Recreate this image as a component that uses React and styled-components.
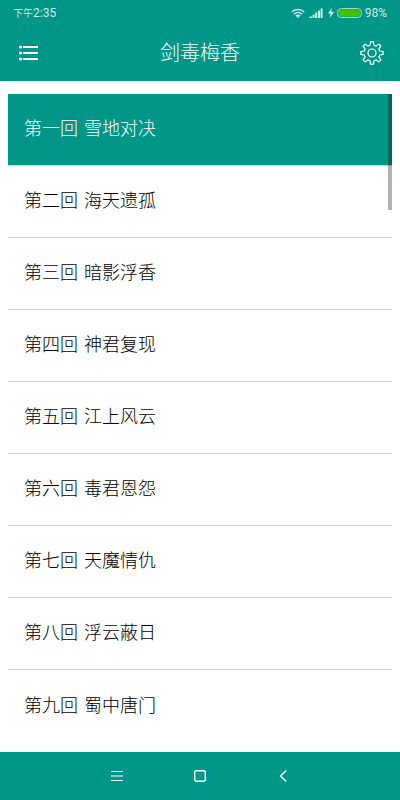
import React, { useState } from "react";
import styled, { createGlobalStyle } from "styled-components";

const teal = "#009688";

const GlobalStyle = createGlobalStyle`
  *, *::before, *::after { box-sizing: border-box; }
  body {
    margin: 0;
    background: #fff;
    font-family: "Noto Sans CJK SC", sans-serif;
    font-weight: 300;
  }
  button { font: inherit; }
`;

const Screen = styled.div`
  display: flex;
  flex-direction: column;
  height: 100vh;
`;

const Top = styled.header`
  flex: none;
  background: ${teal};
  color: #fff;
`;

const StatusBar = styled.div`
  display: flex;
  align-items: center;
  justify-content: space-between;
  height: 24px;
  padding: 2px 13px 0;
  font-family: Roboto, "Noto Sans CJK SC", sans-serif;
  font-size: 12px;
  font-weight: 400;
  line-height: 22px;
  color: #cdebe7;
`;

const DayPart = styled.span`
  font-size: 10px;
`;

const Indicators = styled.div`
  display: flex;
  align-items: center;
  gap: 3px;
`;

const TitleBar = styled.div`
  display: grid;
  grid-template-columns: 56px 1fr 56px;
  align-items: center;
  height: 57px;
`;

const Title = styled.h1`
  margin: 0;
  padding-bottom: 2px;
  font-size: 20px;
  font-weight: 300;
  line-height: 28px;
  text-align: center;
`;

const IconButton = styled.button`
  display: flex;
  align-items: center;
  justify-content: center;
  height: 48px;
  padding: 0;
  border: 0;
  background: none;
  color: #fff;
  cursor: pointer;
`;

const ListArea = styled.main`
  position: relative;
  flex: 1;
  min-height: 0;
  margin: 13px 8px 12px;
`;

const Chapters = styled.ul`
  height: 100%;
  margin: 0;
  padding: 0;
  overflow-y: auto;
  scrollbar-width: none;
  list-style: none;
`;

const Chapter = styled.li`
  height: 72px;
  border-bottom: 1px solid #cfcfcf;
  &:last-child { border-bottom: 0; }
`;

const ChapterButton = styled.button`
  display: flex;
  align-items: center;
  gap: 6px;
  width: 100%;
  height: 100%;
  padding: 0 16px 5px;
  border: 0;
  background: ${(p) => (p.$active ? teal : "transparent")};
  color: ${(p) => (p.$active ? "#fff" : "#000")};
  font-size: 18px;
  line-height: 24px;
  text-align: left;
  cursor: pointer;
`;

const ScrollThumb = styled.div`
  position: absolute;
  top: 0;
  right: 0;
  width: 4px;
  height: 116px;
  background: rgba(0, 0, 0, 0.3);
  pointer-events: none;
`;

const NavBar = styled.nav`
  display: flex;
  flex: none;
  justify-content: center;
  gap: 34px;
  height: 48px;
  background: ${teal};
  button { width: 49px; }
`;

const chapters = [
  ["第一回", "雪地对决"],
  ["第二回", "海天遗孤"],
  ["第三回", "暗影浮香"],
  ["第四回", "神君复现"],
  ["第五回", "江上风云"],
  ["第六回", "毒君恩怨"],
  ["第七回", "天魔情仇"],
  ["第八回", "浮云蔽日"],
  ["第九回", "蜀中唐门"],
];

const gearPath = (() => {
  const points = [];
  for (let i = 0; i < 8; i++) {
    const mid = (i * Math.PI) / 4;
    for (const [offset, radius] of [[-0.25, 8], [-0.13, 11.2], [0.13, 11.2], [0.25, 8]]) {
      const a = mid + offset;
      points.push(`${(12 + radius * Math.sin(a)).toFixed(2)} ${(12 - radius * Math.cos(a)).toFixed(2)}`);
    }
  }
  return `M${points.join("L")}Z`;
})();

const WifiIcon = () => (
  <svg width="14" height="11" viewBox="0 0 14 11" fill="none" stroke="currentColor" strokeWidth="1.5" aria-hidden="true">
    <path d="M.8 4C4.2.6 9.8.6 13.2 4M3 6.2c2.3-2.2 5.7-2.2 8 0M5 8.2c1.2-1.2 2.8-1.2 4 0" />
    <path d="M5.6 8.6h2.8L7 10.3z" fill="currentColor" stroke="none" />
  </svg>
);

const SignalIcon = () => (
  <svg width="17" height="10" viewBox="-2 0 17 10" fill="currentColor" aria-hidden="true">
    <path d="M-.5 8.5H2V10H-.5zM2.6 6.5h2V10h-2zM5.2 4.5h2V10h-2zM8 2.5h2V10H8zM10.6 .5h2V10h-2z" />
  </svg>
);

const BoltIcon = () => (
  <svg width="6" height="10" viewBox="0 0 6 10" fill="currentColor" aria-hidden="true">
    <path d="M3.8 0L0 5.6h2.5L1.7 10 6 4H3.4z" />
  </svg>
);

const BatteryIcon = () => (
  <svg width="25" height="10" viewBox="0 0 25 10" aria-hidden="true">
    <rect x=".5" y=".5" width="24" height="9" rx="4" fill="none" stroke="#9cdbcf" />
    <rect x="1.5" y="1.5" width="22" height="7" rx="3" fill="#43c100" />
  </svg>
);

const ListIcon = () => (
  <svg width="20" height="16" viewBox="0 0 20 16" fill="currentColor" aria-hidden="true">
    <circle cx="2.5" cy="2" r="1.6" />
    <circle cx="2.5" cy="8" r="1.6" />
    <circle cx="2.5" cy="14" r="1.6" />
    <path d="M5 1h15v2H5zM5 7h15v2H5zM5 13h15v2H5z" />
  </svg>
);

const GearIcon = () => (
  <svg width="24" height="24" viewBox="0 0 24 24" fill="none" stroke="currentColor" strokeWidth="1.2" strokeLinejoin="round" aria-hidden="true">
    <path d={gearPath} />
    <circle cx="12" cy="12" r="4" />
  </svg>
);

export default function App() {
  const [current, setCurrent] = useState(0);
  return (
    <Screen>
      <GlobalStyle />
      <Top>
        <StatusBar>
          <span><DayPart>下午</DayPart>2:35</span>
          <Indicators>
            <WifiIcon />
            <SignalIcon />
            <BoltIcon />
            <BatteryIcon />
            <span>98%</span>
          </Indicators>
        </StatusBar>
        <TitleBar>
          <IconButton aria-label="目录"><ListIcon /></IconButton>
          <Title>剑毒梅香</Title>
          <IconButton aria-label="设置"><GearIcon /></IconButton>
        </TitleBar>
      </Top>
      <ListArea>
        <Chapters>
          {chapters.map(([number, name], i) => (
            <Chapter key={number}>
              <ChapterButton $active={i === current} onClick={() => setCurrent(i)}>
                <span>{number}</span> <span>{name}</span>
              </ChapterButton>
            </Chapter>
          ))}
        </Chapters>
        <ScrollThumb />
      </ListArea>
      <NavBar>
        <IconButton aria-label="菜单">
          <svg width="12" height="12" viewBox="0 0 12 12" stroke="currentColor" strokeWidth="1.1" aria-hidden="true">
            <path d="M0 1.5h12M0 6h12M0 10.5h12" />
          </svg>
        </IconButton>
        <IconButton aria-label="主页">
          <svg width="12" height="12" viewBox="0 0 12 12" fill="none" stroke="currentColor" strokeWidth="1.4" aria-hidden="true">
            <rect x=".7" y=".7" width="10.6" height="10.6" rx="2" />
          </svg>
        </IconButton>
        <IconButton aria-label="返回">
          <svg width="8" height="12" viewBox="0 0 8 12" fill="none" stroke="currentColor" strokeWidth="1.4" aria-hidden="true">
            <path d="M7.2 .5L1.5 6 7.2 11.5" />
          </svg>
        </IconButton>
      </NavBar>
    </Screen>
  );
}
